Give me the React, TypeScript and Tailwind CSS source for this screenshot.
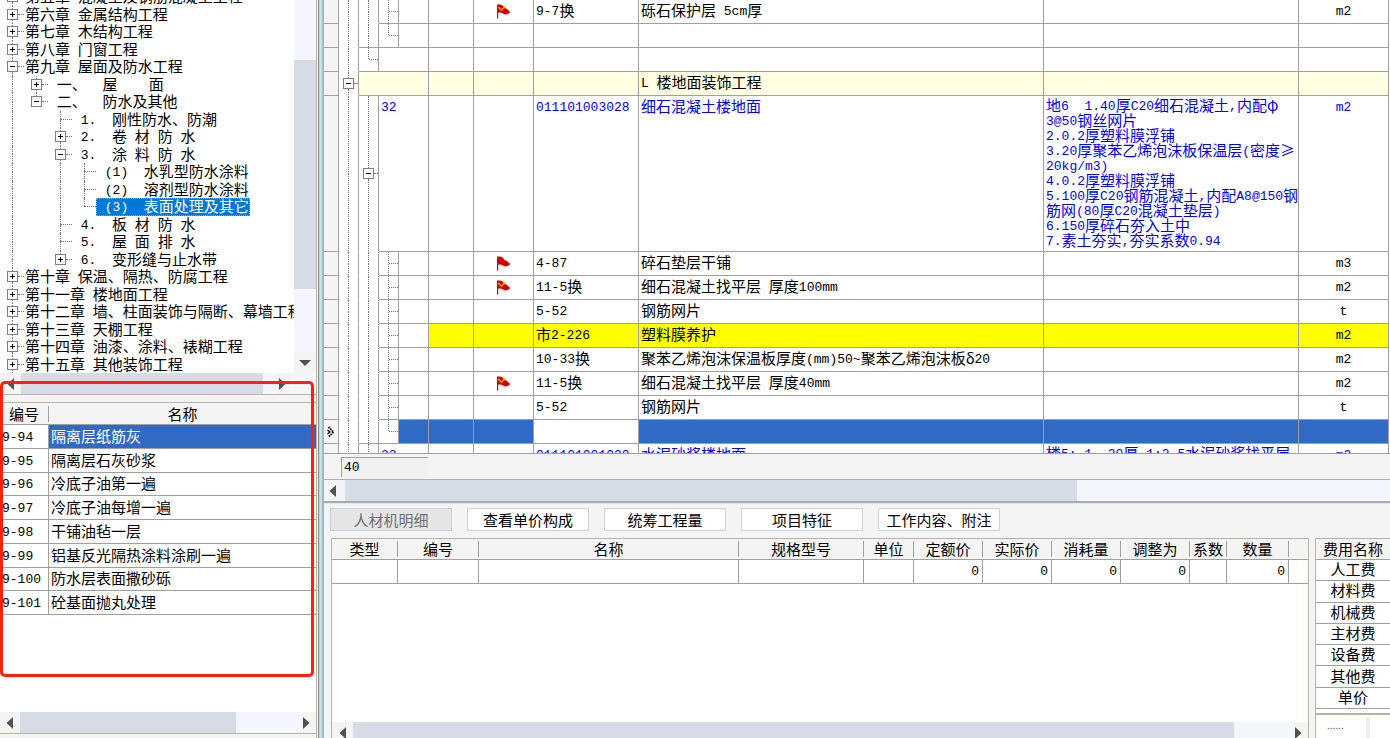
import { ReactNode } from "react";
import clsx from "clsx";

type BranchKind = "none" | "line" | "tee" | "elbow" | "minus" | "plus";

type TreeNode = {
  text: string;
  rails: BranchKind[];
  selected?: boolean;
  last?: boolean;
};

const treeNodes: TreeNode[] = [
  { text: "第五章 混凝土及钢筋混凝土工程", rails: ["plus"] },
  { text: "第六章 金属结构工程", rails: ["plus"] },
  { text: "第七章 木结构工程", rails: ["plus"] },
  { text: "第八章 门窗工程", rails: ["plus"] },
  { text: "第九章 屋面及防水工程", rails: ["minus"] },
  { text: " 一、  屋    面", rails: ["line", "plus"] },
  { text: " 二、  防水及其他", rails: ["line", "minus"], last: true },
  { text: " 1.  刚性防水、防潮", rails: ["line", "none", "tee"] },
  { text: " 2.  卷 材 防 水", rails: ["line", "none", "plus"] },
  { text: " 3.  涂 料 防 水", rails: ["line", "none", "minus"] },
  { text: " (1)  水乳型防水涂料", rails: ["line", "none", "line", "tee"] },
  { text: " (2)  溶剂型防水涂料", rails: ["line", "none", "line", "tee"] },
  { text: " (3)  表面处理及其它", rails: ["line", "none", "line", "elbow"], selected: true },
  { text: " 4.  板 材 防 水", rails: ["line", "none", "tee"] },
  { text: " 5.  屋 面 排 水", rails: ["line", "none", "tee"] },
  { text: " 6.  变形缝与止水带", rails: ["line", "none", "plus"], last: true },
  { text: "第十章 保温、隔热、防腐工程", rails: ["plus"] },
  { text: "第十一章 楼地面工程", rails: ["plus"] },
  { text: "第十二章 墙、柱面装饰与隔断、幕墙工程", rails: ["plus"] },
  { text: "第十三章 天棚工程", rails: ["plus"] },
  { text: "第十四章 油漆、涂料、裱糊工程", rails: ["plus"] },
  { text: "第十五章 其他装饰工程", rails: ["plus"] },
];

const quotaItems = [
  { code: "9-94", name: "隔离层纸筋灰" },
  { code: "9-95", name: "隔离层石灰砂浆" },
  { code: "9-96", name: "冷底子油第一遍" },
  { code: "9-97", name: "冷底子油每增一遍" },
  { code: "9-98", name: "干铺油毡一层" },
  { code: "9-99", name: "铝基反光隔热涂料涂刷一遍" },
  { code: "9-100", name: "防水层表面撒砂砾" },
  { code: "9-101", name: "砼基面抛丸处理" },
];

type BillRow = {
  // one entry for every tree column the row does not span
  rails: BranchKind[];
  // how many of those columns carry on below without a bottom rule
  open: number;
  kind?: "chapter" | "item" | "marked" | "current";
  no?: string;
  flag?: "plain" | "check";
  code?: string;
  name?: string;
  feature?: string[];
  unit?: string;
};

const billRows: BillRow[] = [
  { rails: ["line", "line", "tee"], open: 2, flag: "check", code: "9-7换", name: "砾石保护层 5cm厚", unit: "m2" },
  { rails: ["line", "line", "elbow"], open: 1 },
  { rails: ["line", "elbow"], open: 1 },
  { rails: ["minus"], open: 1, kind: "chapter", name: "L 楼地面装饰工程" },
  {
    rails: ["line", "minus"],
    open: 2,
    kind: "item",
    no: "32",
    code: "011101003028",
    name: "细石混凝土楼地面",
    feature: [
      "地6  1.40厚C20细石混凝土,内配φ",
      "3@50钢丝网片",
      "2.0.2厚塑料膜浮铺",
      "3.20厚聚苯乙烯泡沫板保温层(密度≥",
      "20kg/m3)",
      "4.0.2厚塑料膜浮铺",
      "5.100厚C20钢筋混凝土,内配A8@150钢",
      "筋网(80厚C20混凝土垫层)",
      "6.150厚碎石夯入土中",
      "7.素土夯实,夯实系数0.94",
    ],
    unit: "m2",
  },
  { rails: ["line", "line", "tee"], open: 2, flag: "plain", code: "4-87", name: "碎石垫层干铺", unit: "m3" },
  { rails: ["line", "line", "tee"], open: 2, flag: "check", code: "11-5换", name: "细石混凝土找平层 厚度100mm", unit: "m2" },
  { rails: ["line", "line", "tee"], open: 2, code: "5-52", name: "钢筋网片", unit: "t" },
  { rails: ["line", "line", "tee"], open: 2, kind: "marked", code: "市2-226", name: "塑料膜养护", unit: "m2" },
  {
    rails: ["line", "line", "tee"],
    open: 2,
    code: "10-33换",
    name: "聚苯乙烯泡沫保温板厚度(mm)50~聚苯乙烯泡沫板δ20",
    unit: "m2",
  },
  { rails: ["line", "line", "tee"], open: 2, flag: "check", code: "11-5换", name: "细石混凝土找平层 厚度40mm", unit: "m2" },
  { rails: ["line", "line", "tee"], open: 2, code: "5-52", name: "钢筋网片", unit: "t" },
  { rails: ["line", "line", "elbow"], open: 1, kind: "current" },
  {
    rails: ["line", "line"],
    open: 2,
    kind: "item",
    no: "33",
    code: "011101001020",
    name: "水泥砂浆楼地面",
    feature: ["楼5: 1. 20厚 1:2.5水泥砂浆找平层"],
    unit: "m2",
  },
];

const tabs = ["人材机明细", "查看单价构成", "统筹工程量", "项目特征", "工作内容、附注"];

const detailColumns = [
  { label: "类型", width: "w-[66px]", value: "" },
  { label: "编号", width: "w-[81px]", value: "" },
  { label: "名称", width: "", value: "" },
  { label: "规格型号", width: "w-[125px]", value: "" },
  { label: "单位", width: "w-[50px]", value: "" },
  { label: "定额价", width: "w-[69px]", value: "0" },
  { label: "实际价", width: "w-[69px]", value: "0" },
  { label: "消耗量", width: "w-[69px]", value: "0" },
  { label: "调整为", width: "w-[69px]", value: "0" },
  { label: "系数", width: "w-[37px]", value: "" },
  { label: "数量", width: "w-[62px]", value: "0" },
  { label: "", width: "w-[19px]", value: "" },
];

const feeNames = ["人工费", "材料费", "机械费", "主材费", "设备费", "其他费", "单价"];

// Latin runs are set in a smaller monospace so two of them take one CJK cell
const Mixed = ({ text }: { text: string }) => (
  <>
    {text.split(/([\x20-\x7e]+)/).map((part, i) =>
      i % 2 ? (
        <span
          key={i}
          className="align-[1px] font-['Liberation_Mono','Noto_Sans_CJK_SC',monospace] text-[13px] leading-none"
        >
          {part}
        </span>
      ) : (
        part
      )
    )}
  </>
);

const Toggle = ({ open }: { open: boolean }) => (
  <svg viewBox="0 0 11 11" className="size-[11px] shrink-0" shapeRendering="crispEdges">
    <rect x="0.5" y="0.5" width="10" height="10" fill="#fff" stroke="#808080" />
    <path d={open ? "M3 5.5h5" : "M3 5.5h5M5.5 3v5"} stroke="#000" />
  </svg>
);

const Branch = ({ kind, last }: { kind: BranchKind; last?: boolean }) => {
  if (kind === "none") return <div />;
  const box = kind === "minus" || kind === "plus";
  const bar = "w-px flex-1 border-l border-dotted";
  return (
    <div className="flex h-full w-full flex-col items-center">
      <span className={clsx(bar, "border-gray-500")} />
      {kind !== "line" && (
        <div className="flex w-full items-center">
          <span className="flex-1" />
          {box && <Toggle open={kind === "minus"} />}
          <span className="flex-1 border-t border-dotted border-gray-500" />
        </div>
      )}
      <span className={clsx(bar, kind === "elbow" || last ? "border-transparent" : "border-gray-500")} />
    </div>
  );
};

const Flag = ({ check }: { check: boolean }) => (
  <svg viewBox="0 0 15 15" className="mx-auto size-[15px]">
    <path
      d="M1 .6v14h1.200V8.800c1.800-.8 3.200-.3 4.800.7 2.600 1.600 5.200 1.200 7.600-1.900-1.200-.1-1.700-.4-2.300-1.300-1.200-1.600-2.200-2.300-3.700-2.100C7.500 2 6 .5 3.500.5 2.400.5 1.600.5 1 .6z"
      fill="#d40000"
    />
    {check && <path d="M2 3l3.500 3L9.500 2" fill="none" stroke="#ffb400" strokeWidth="1.300" />}
  </svg>
);

const Arrow = ({ dir }: { dir: "left" | "right" | "down" }) => (
  <svg viewBox="0 0 12 12" className="size-3">
    <path
      d={dir === "left" ? "M9 0v12L2.500 6z" : dir === "right" ? "M3 0v12l6.500-6z" : "M0 3h12L6 9z"}
      fill="#505050"
    />
  </svg>
);

type ScrollProps = {
  thumb: string;
  left?: string;
  right?: string;
};

const HScroll = ({ thumb, left = "w-[21px]", right }: ScrollProps) => (
  <div className="flex h-[21px] shrink-0 bg-[#f4f6fb]">
    <div className={clsx("flex shrink-0 items-center justify-center bg-[#f4f4f4]", left)}>
      <Arrow dir="left" />
    </div>
    <div className="min-w-0 flex-1">
      <div className={clsx("h-full bg-[#d7dbe5]", thumb)} />
    </div>
    {right && (
      <div className={clsx("flex shrink-0 items-center bg-[#f4f4f4]", right)}>
        <Arrow dir="right" />
      </div>
    )}
  </div>
);

const ChapterTree = () => (
  <div className="flex h-[373px] shrink-0">
    <div className="flex min-w-0 flex-1 flex-col justify-end overflow-hidden bg-white">
      <ul className="grid h-[385px] shrink-0 auto-rows-fr">
        {treeNodes.map((node, i) => (
          <li key={i} className="flex min-w-0 whitespace-pre leading-[13px]">
            {node.rails.map((kind, r) => (
              <div key={r} className="w-6 shrink-0">
                <Branch kind={kind} last={node.last && r === node.rails.length - 1} />
              </div>
            ))}
            <span
              className={clsx(
                "border border-dotted",
                node.selected ? "border-[#ff8728] bg-[#0078d7] text-white" : "border-transparent"
              )}
            >
              <Mixed text={node.text} />
            </span>
          </li>
        ))}
      </ul>
    </div>
    <div className="flex w-[22px] shrink-0 flex-col bg-[#f4f6fb]">
      <div className="h-[60px]" />
      <div className="h-[229px] bg-[#d7dbe5]" />
      <div className="flex-1" />
      <div className="flex h-5 items-center justify-center bg-[#f4f4f4]">
        <Arrow dir="down" />
      </div>
    </div>
  </div>
);

const QuotaTable = () => (
  <table className="h-[212px] w-full table-fixed border-separate border-spacing-0">
    <thead>
      <tr className="bg-[#f4f4f4]">
        <th className="h-[22px] w-[49px] border-b border-[#a0a0a0] p-0 font-normal">
          <div className="border-r border-[#a0a0a0] leading-4">编号</div>
        </th>
        <th className="border-b border-[#a0a0a0] p-0 font-normal leading-4">名称</th>
      </tr>
    </thead>
    <tbody>
      {quotaItems.map((item, i) => (
        <tr key={item.code}>
          <td className="border-r border-b border-[#a0a0a0] bg-white p-0 pb-0.5 pl-0.5 leading-[19px]">
            <Mixed text={item.code} />
          </td>
          <td
            className={clsx(
              "border-b border-[#a0a0a0] p-0 pb-0.5 pl-0.5 leading-[19px]",
              i === 0 ? "bg-[#316ac5] text-white" : "bg-white"
            )}
          >
            {item.name}
          </td>
        </tr>
      ))}
    </tbody>
  </table>
);

const Sidebar = () => (
  <aside className="flex w-[317px] shrink-0 flex-col border-r border-[#b9b4a4] bg-[#f4f4f4]">
    <ChapterTree />
    <HScroll thumb="w-[242px]" right="mr-[26px] w-[14px]" />
    <div className="h-[9px] shrink-0 border-y border-[#b9b4a4]" />
    <div className="relative flex flex-1 flex-col">
      <QuotaTable />
      <div className="flex-1 bg-white" />
      <HScroll thumb="w-[216px]" right="w-4" left="w-5" />
      <div className="h-[5px] border-t border-[#b9b4a4]" />
      <div className="absolute -top-[22px] left-0 h-[296px] w-[314px] rounded-[5px] border-[3px] border-[#ff2010]" />
    </div>
  </aside>
);

const Cell = ({ children, className, span }: { children?: ReactNode; className?: string; span?: number }) => (
  <td colSpan={span} className={clsx("border-r border-b border-[#a0a0a0] p-0", className)}>
    {children}
  </td>
);

const BillTable = () => (
  <div className="h-[454px] shrink-0 overflow-hidden border-b border-[#a0a0a0] bg-white pr-px">
    <table className="w-full table-fixed border-separate border-spacing-0 whitespace-pre">
      <colgroup>
        <col className="w-[15px]" />
        <col className="w-5" />
        <col className="w-5" />
        <col className="w-5" />
        <col className="w-[30px]" />
        <col className="w-[45px]" />
        <col className="w-[60px]" />
        <col className="w-[105px]" />
        <col />
        <col className="w-[255px]" />
        <col className="w-[90px]" />
      </colgroup>
      <tbody>
        {billRows.map((row, i) => {
          const feature = row.feature ?? [];
          const height = feature.length > 1 ? "h-[156px]" : "h-6";
          const base = clsx(
            row.kind === "chapter" && "bg-[#ffffe1]",
            row.kind === "item" && "text-[#0000ff]",
            row.kind === "current" && "bg-[#316ac5]"
          );
          const fill = clsx(base, row.kind === "marked" && "bg-[#ffff00]");
          const text = "pl-0.5 align-top leading-[19px]";
          return (
            <tr key={i}>
              <Cell className={clsx(height, "bg-[#f4f4f4]")}>
                {row.kind === "current" && (
                  <svg viewBox="0 0 8 12" className="ml-[3px] h-3 w-2" fill="none" stroke="#000">
                    <path d="M1.500 1l5 5-5 5" strokeWidth="1.800" strokeDasharray="1.600 0.800" />
                    <path d="M0.500 4l2.500 2-2.500 2" strokeWidth="1.300" />
                  </svg>
                )}
              </Cell>
              {row.rails.map((kind, r) => (
                <Cell key={r} className={clsx(height, r < row.open && "border-b-white")}>
                  <Branch kind={kind} />
                </Cell>
              ))}
              <Cell span={4 - row.rails.length} className={clsx(base, text)}>
                <Mixed text={row.no ?? ""} />
              </Cell>
              <Cell className={fill} />
              <Cell className={fill}>{row.flag && <Flag check={row.flag === "check"} />}</Cell>
              <Cell className={clsx(row.kind === "current" ? "bg-white" : fill, text)}>
                <Mixed text={row.code ?? ""} />
              </Cell>
              <Cell className={clsx(fill, text)}>
                <Mixed text={row.name ?? ""} />
              </Cell>
              <Cell className={clsx(fill, "pt-0.5 pl-0.5 align-top leading-[13px]")}>
                {feature.map((line) => (
                  <div key={line} className="h-[15px]">
                    <Mixed text={line} />
                  </div>
                ))}
              </Cell>
              <Cell className={clsx(fill, "text-center align-top leading-[19px]")}>
                <Mixed text={row.unit ?? ""} />
              </Cell>
            </tr>
          );
        })}
      </tbody>
    </table>
  </div>
);

const DetailTable = () => (
  <div className="flex min-w-0 flex-1 flex-col border border-b-0 border-[#b9b4a4] bg-white">
    <table className="w-full table-fixed border-separate border-spacing-0">
      <thead>
        <tr className="bg-[#f4f4f4]">
          {detailColumns.map((col, i) => (
            <th key={i} className={clsx("h-[21px] border-b border-[#a0a0a0] p-0 font-normal", col.width)}>
              <div
                className={clsx("h-4 leading-4", i < detailColumns.length - 1 && "border-r border-[#a0a0a0]")}
              >
                {col.label}
              </div>
            </th>
          ))}
        </tr>
      </thead>
      <tbody>
        <tr>
          {detailColumns.map((col, i) => (
            <td
              key={i}
              className={clsx(
                "h-6 border-b border-[#a0a0a0] p-0 pr-[3px] text-right align-top leading-[19px]",
                i < detailColumns.length - 1 && "border-r"
              )}
            >
              <Mixed text={col.value} />
            </td>
          ))}
        </tr>
      </tbody>
    </table>
    <div className="flex-1" />
    <HScroll thumb="w-[calc(100%-58px)]" right="w-4" />
  </div>
);

const FeePanel = () => (
  <div className="flex w-[75px] shrink-0 flex-col border-t border-l border-[#b9b4a4] bg-white">
    <table className="h-[170px] w-full table-fixed border-separate border-spacing-0 text-center">
      <thead>
        <tr>
          <th className="h-[21px] border-b border-[#a0a0a0] bg-[#f4f4f4] p-0 font-normal leading-4">费用名称</th>
        </tr>
      </thead>
      <tbody>
        {feeNames.map((name) => (
          <tr key={name}>
            <td className="border-b border-[#a0a0a0] p-0 pb-0.5 leading-4">{name}</td>
          </tr>
        ))}
      </tbody>
    </table>
    <div className="mt-1 flex flex-1 items-stretch border-t-2 border-[#b9b4a4] pt-0.5">
      <span className="flex-1 pl-[11px] text-[10px] leading-4 text-gray-600">......</span>
      <span className="mr-5 w-1 bg-[#eeeeee]" />
    </div>
  </div>
);

export default function App() {
  return (
    <div className="flex h-screen overflow-hidden bg-[#f4f4f4] font-['Noto_Sans_CJK_SC',sans-serif] text-[15px] text-black">
      <Sidebar />
      <div className="flex w-[7px] shrink-0">
        <span className="w-px bg-[#f4f4f4]" />
        <span className="w-px bg-[#8c8c8c]" />
        <span className="w-px bg-[#d0d0d0]" />
        <span className="w-0.5 bg-[#d5dde3]" />
        <span className="w-0.5 bg-[#9ab8c8]" />
      </div>
      <main className="flex min-w-0 flex-1 flex-col">
        <BillTable />
        <div className="flex h-[26px] shrink-0 items-center border-b border-[#b0b0b0] pl-[17px]">
          <input
            aria-label="合计"
            readOnly
            defaultValue="40"
            className="h-5 w-[87px] border-t border-l border-[#a0a0a0] bg-[#f1f1f1] pl-0.5 font-['Liberation_Mono',monospace] text-[13px] outline-none"
          />
        </div>
        <HScroll thumb="w-[70%]" left="w-[21px] pr-1" />
        <div className="h-[3px] shrink-0 border-t-2 border-[#a3aeae] bg-[#dceaf2]" />
        <div className="flex h-[34px] shrink-0 gap-[15px] pt-1 pl-1.5">
          {tabs.map((tab, i) => (
            <button
              key={tab}
              type="button"
              className={clsx(
                "h-[23px] w-[122px] shrink-0 border border-[#ccd2dc] leading-[19px]",
                i === 0 ? "bg-[#e5e5e5] text-[#707070]" : "bg-white"
              )}
            >
              {tab}
            </button>
          ))}
        </div>
        <div className="-mb-[5px] flex min-h-0 flex-1 gap-1.5 pl-[7px]">
          <DetailTable />
          <FeePanel />
        </div>
      </main>
    </div>
  );
}
